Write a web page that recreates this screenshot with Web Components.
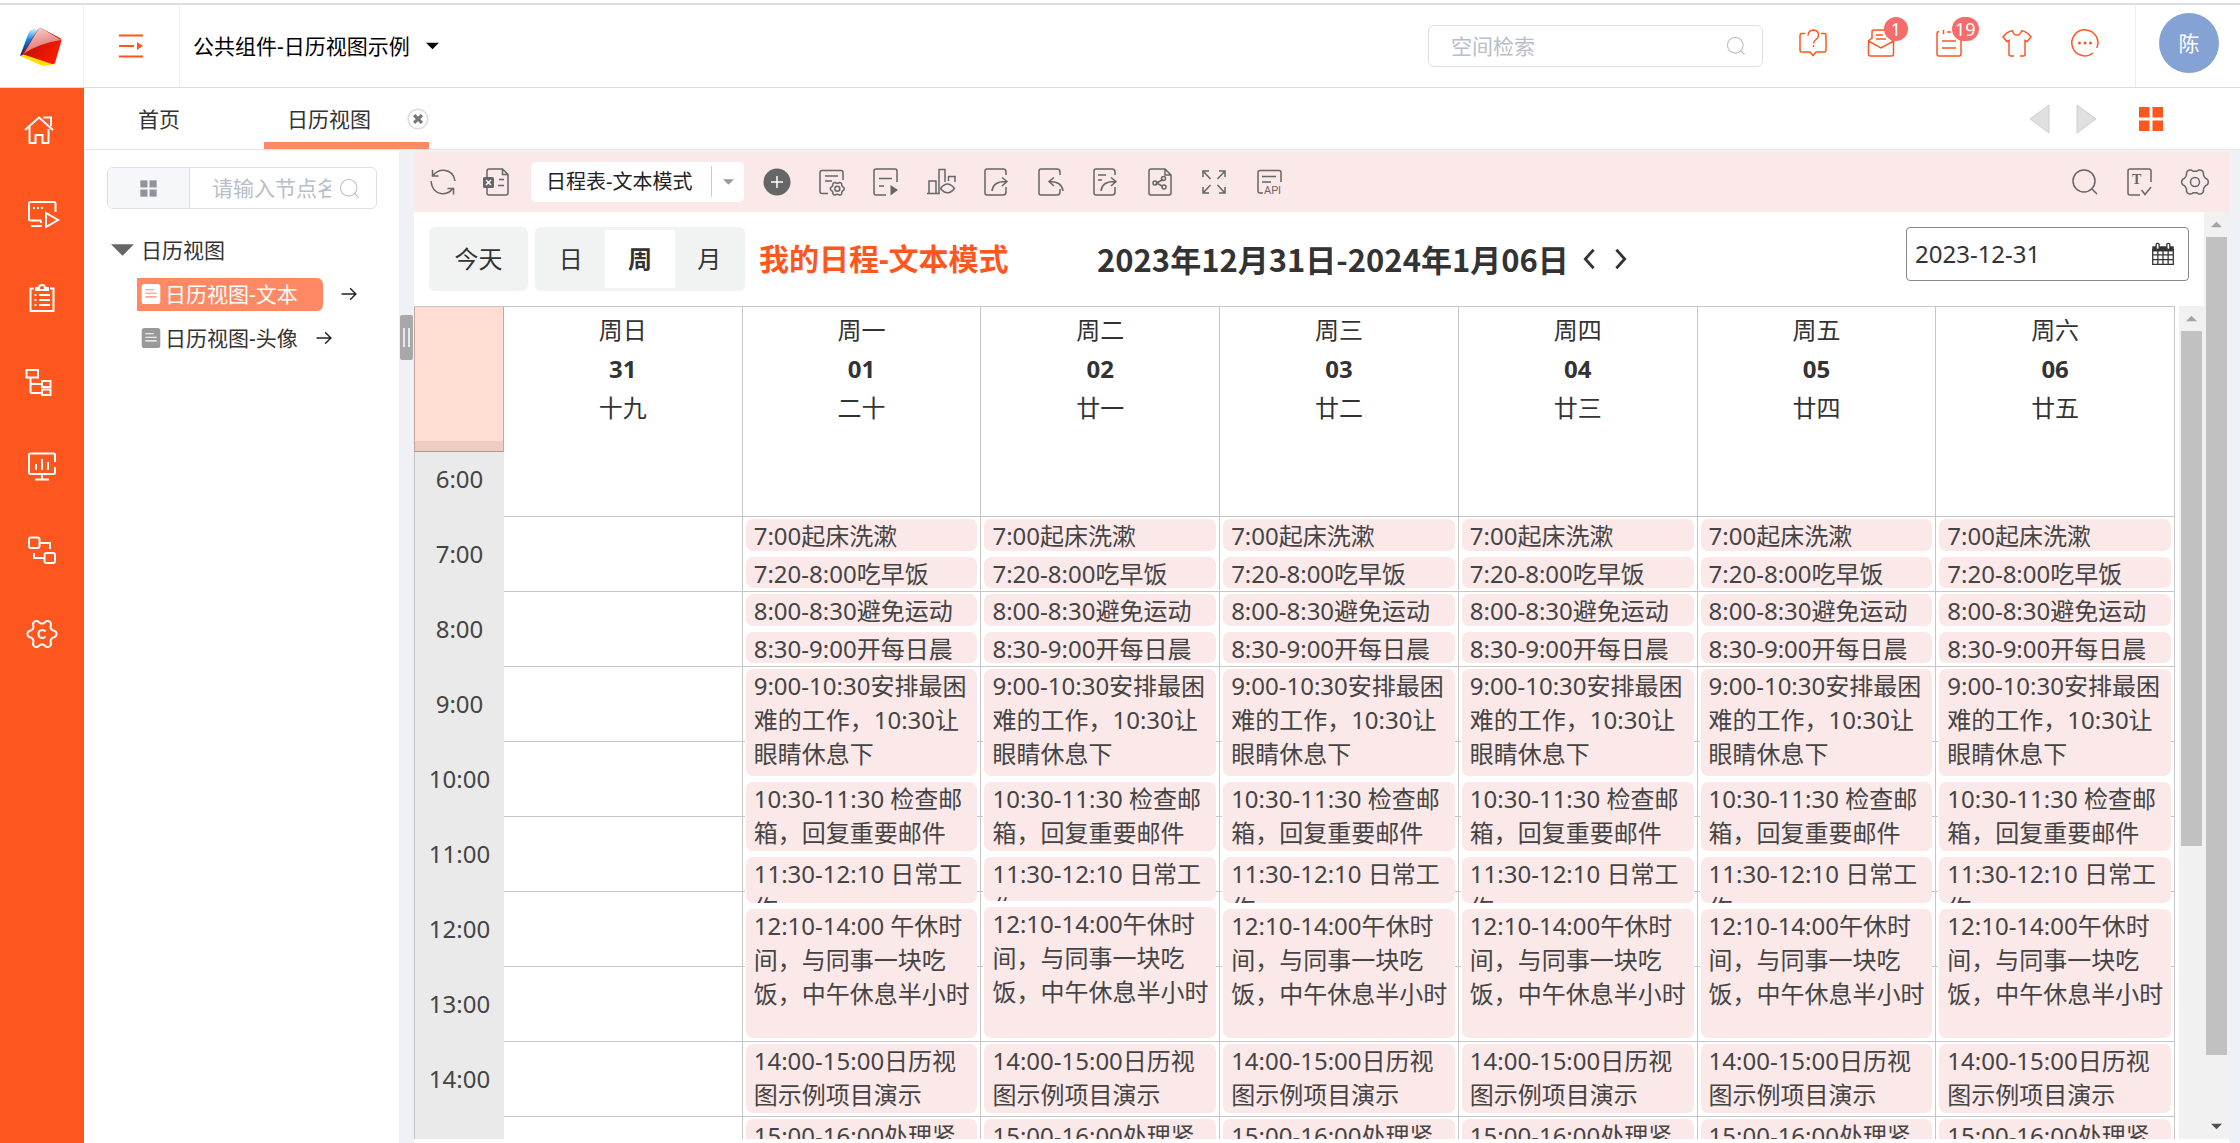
<!DOCTYPE html>
<html lang="zh-CN">
<head>
<meta charset="utf-8">
<title>日历视图</title>
<style>
  html, body { margin: 0; height: 100%; }
  body {
    font-family: "Noto Sans", "Noto Sans CJK SC", sans-serif;
    font-size: 21px; line-height: 30px; color: #333; background: #fff; overflow: hidden;
    --brand: #fd571f; --brand-soft: #ff8965; --tint: #fbe8e8; --strip: #eff1f6; --line: #c6c6c6; --edge: #dcdfe6; --muted: #b9bec8;
  }
</style>
</head>
<body>
<app-shell>
  <top-bar slot="top"></top-bar>
  <side-nav slot="nav"></side-nav>
  <tab-bar slot="tabs"></tab-bar>
  <tree-panel slot="tree"></tree-panel>
  <split-bar slot="split"></split-bar>
  <tool-bar slot="tools"></tool-bar>
  <calendar-view slot="main"></calendar-view>
</app-shell>
<script>
const RESET = `:host,*{box-sizing:border-box} button,input,select{font:inherit;color:inherit;margin:0;padding:0;border:0;background:none;outline:0} button{display:inline-flex;align-items:center;justify-content:center;cursor:pointer} a{color:inherit;text-decoration:none} input::placeholder{color:var(--muted);opacity:1}`;

function define(name, css, html) {
  customElements.define(name, class extends HTMLElement {
    connectedCallback() {
      if (this.shadowRoot) return;
      this.attachShadow({ mode: 'open' });
      this.shadowRoot.innerHTML = `<style>${RESET}${css}</style>${typeof html === 'function' ? html(this) : html}`;
    }
  });
}

// Outline of a six-lobed cog centred on 14,14.
const cog = (radius, depth) => 'M' + Array.from({ length: 96 }, (_, i) => {
  const a = i / 96 * 2 * Math.PI, c = Math.cos(6 * a);
  const r = radius + depth * Math.sign(c) * Math.pow(Math.abs(c), .6);
  return (14 + r * Math.cos(a)).toFixed(2) + ' ' + (14 + r * Math.sin(a)).toFixed(2);
}).join('L') + 'Z';

const ICONS = {
  fold: '<path d="M1 3.500H25M1 14H16M1 24.500H25"/><path d="M19 10l6 4-6 4z" fill="currentColor" stroke="none"/>',
  help: '<path d="M6 4.500H3Q1 4.500 1 6.500V21Q1 23 3 23H11L14 26.500L17 23H25Q27 23 27 21V6.500Q27 4.500 25 4.500H22"/><path d="M9 6.500Q9.500 1 14.500 1Q19.500 1.200 19.500 6.200Q19.500 8.500 17 10.500Q14.500 12.500 14.500 14.500"/><circle cx="14.500" cy="17" r="1" fill="currentColor" stroke="none"/>',
  mail: '<path d="M5 10V3Q5 1 7 1H20M1.500 12V25Q1.500 27 3.500 27H24.500Q26.500 27 26.500 25V12L14 19Z M1.500 12L5 9M26.500 12L23 9M9 6H16M9 10H19"/>',
  plan: '<path d="M4 2.500Q2 2.500 2 5V25Q2 27 4 27H24Q26 27 26 25V9M2 8V5M8.500 1V5M7 12H21M7 19H21M12 3H16"/>',
  shirt: '<path d="M11 27H8Q6 27 6 25.500V11.500L4 12.500L0 8Q4 2.500 9.500 1.800Q10.500 6 14 6Q17.500 6 18.500 1.800Q24 2.500 28 8L24 12.500L22 11.500V25.500Q22 27 20 27H17"/>',
  more: '<path d="M22 24A13 13 0 1 1 25.800 19"/><g fill="currentColor" stroke="none"><circle cx="8.500" cy="14" r="1.500"/><circle cx="14" cy="14" r="1.500"/><circle cx="19.500" cy="14" r="1.500"/></g>',
  search: '<circle cx="13" cy="13" r="11"/><path d="M20.500 20.500L26 26"/>',
  home: '<g transform="translate(-3 0)"><path d="M0 14L14 1.500L28 14M4.500 11V26.500Q4.500 27 5 27H10.500V19H17.500V27H23Q23.500 27 23.500 26.500V13M18 1.500H26V10"/></g>',
  device: '<path d="M13 20.500H2.500Q1 20.500 1 19V3.500Q1 2 2.500 2H26Q27.500 2 27.500 3.500V12M3 26H14M13 20.500V23M18 13V27L30 20Z"/><path d="M5 8H15" stroke-dasharray="2 2"/>',
  clip: '<path d="M6 4.500H2.500V27H25.500V4.500H22M8 6V4H11Q11 1 14 1Q17 1 17 4H20V6Z M11 11H22M11 16H22M11 21H22"/><path d="M6.500 11H8.500M6.500 16H8.500M6.500 21H8.500"/>',
  tree: '<g transform="translate(-3 0)"><path d="M1.500 2H13V9.500H1.500ZM5.500 9.500V24Q5.500 25 6.500 25H16M5.500 16H16M17 13H25.500V19H17ZM17 21.500H25.500V27H17Z"/></g>',
  board: '<path d="M27 10V3Q27 1.500 25.500 1.500H2.500Q1 1.500 1 3V20.500Q1 22 2.500 22H25.500Q27 22 27 20.500V15M14 22V27M7 27.500H21M8 12V18M14 7V18M20 10V18"/>',
  flow: '<rect x="1" y="1.500" width="10.500" height="10.500" rx="2"/><rect x="16.500" y="17" width="10.500" height="10" rx="2"/><path d="M12 7H22V13M6 17V22H16"/>',
  gearc: '<path d="' + cog(12.5, 2) + '"/><path d="M17.500 11.500Q16.500 10 14 10Q10.500 10.200 10.500 14Q10.500 17.800 14 18Q16.500 18 17.500 16.500"/>',
  gear: '<path d="' + cog(12, 1.3) + '"/><circle cx="14" cy="14" r="4.500"/>',
  refresh: '<path d="M3.500 2L3.500 8H9.500M4 7.500Q8 2 15 2.200Q24.500 3 26 13M2 13Q3 24 12 25.500Q20 26.500 24 20M18.500 20.500H24.500V26.500"/>',
  excel: '<path d="M5 9V3Q5 1 7 1H20.500L26 6.500V25Q26 27 24 27H7Q5 27 5 25V20M20.500 1V6.500H26M17 11.500H22M16 17.500H22"/><rect x="1" y="9" width="11" height="11" rx="1.500" fill="currentColor" stroke="none"/><path d="M4 12L9 17M9 12L4 17" stroke="#fff"/>',
  plus: '<circle cx="14" cy="14" r="13.500" fill="currentColor" stroke="none"/><path d="M14 8V20M8 14H20" stroke="#fff"/>',
  docgear: '<path d="M10 25.500H4Q2 25.500 2 23.500V4.500Q2 2.500 4 2.500H23Q25 2.500 25 4.500V12M7 8H20M7 13H14"/><path d="' + cog(12, 1.3) + '" transform="translate(12 13.500) scale(.52)" stroke-width="2.900"/><circle cx="19.300" cy="20.800" r="2.500"/>',
  docplay: '<path d="M14 27H4Q2 27 2 25V3Q2 1 4 1H23Q25 1 25 3V14M7 10.500H20M7 18H12"/><path d="M18.500 17L26 22L18.500 27.500Z" fill="currentColor" stroke="none"/>',
  charteye: '<path d="M0 25.500H13M2 25V13H9V25M12 25V1.500H18V14M21.500 13V8.500H28V14"/><path d="M13.500 20.500Q20.500 11.500 27.500 20.500Q20.500 29 13.500 20.500Z"/>',
  docout: '<path d="M24 7V4Q24 1 21 1H5Q3 1 3 3V25Q3 27 5 27H21Q24 27 24 24V19M10 23Q11 13 24.500 13.500M20 9.500L25 13.500L20 18"/>',
  docin: '<path d="M24 7V4Q24 1 21 1H5Q3 1 3 3V25Q3 27 5 27H21Q24 27 24 24V21M27 23Q26 13.500 13.500 13.500M18 9.500L13 13.500L18 18"/>',
  doclist: '<path d="M24 7V4Q24 1 21 1H5Q3 1 3 3V25Q3 27 5 27H21Q24 27 24 24V19M10 23Q11 13 24.500 13.500M20 9.500L25 13.500L20 18M7 7H15M7 12H11"/>',
  docshare: '<path d="M19 1H5Q3 1 3 3V25Q3 27 5 27H23Q25 27 25 25V7ZM19 1V7H25M17 11.500L10.500 15L17 18.500"/><circle cx="9" cy="15" r="2"/><circle cx="17.500" cy="10.500" r="2"/><circle cx="18" cy="19" r="2"/>',
  expand: '<path d="M3 9V3H9M19 3H25V9M25 19V25H19M9 25H3V19M3 3L10.500 11M25 3L17.500 11M25 25L17.500 17M3 25L10.500 17"/>',
  api: '<path d="M8 25H5Q3 25 3 23V4.500Q3 2.500 5 2.500H24Q26 2.500 26 4.500V14M7 8.500H21M7 14H16"/><text x="9" y="26" font-size="11" font-family="Roboto" fill="currentColor" stroke="none">API</text>',
  textcheck: '<path d="M14 27H4Q2 27 2 25V3Q2 1 4 1H23Q25 1 25 3V14M15.500 22L19 26.500L25 19"/><text x="6" y="15.500" font-size="14" font-weight="bold" font-family="Liberation Serif" fill="currentColor" stroke="none">T</text>',
  grid: '<g fill="currentColor" stroke="none"><rect x="2" y="2" width="10.500" height="10.500"/><rect x="15.500" y="2" width="10.500" height="10.500"/><rect x="2" y="15.500" width="10.500" height="10.500"/><rect x="15.500" y="15.500" width="10.500" height="10.500"/></g>',
  down: '<path d="M0 7H28L14 21Z" fill="currentColor" stroke="none"/>',
  up: '<path d="M0 21H28L14 7Z" fill="currentColor" stroke="none"/>',
  left: '<path d="M23 0V28L4 14Z" fill="#e0e0e0" stroke="#cfcfcf" stroke-width="1"/>',
  right: '<path d="M5 0V28L24 14Z" fill="#e0e0e0" stroke="#cfcfcf" stroke-width="1"/>',
  close: '<circle cx="14" cy="14" r="12.500" fill="#fff" stroke="#ddd" stroke-width="2"/><path d="M9 9L19 19M19 9L9 19" stroke="#777" stroke-width="4"/>',
  arrow: '<path d="M1 14H26M16 4L26 14L16 24" stroke-width="2.500"/>',
  prev: '<path d="M19 4L10 14L19 24" stroke-width="3"/>',
  next: '<path d="M9 4L18 14L9 24" stroke-width="3"/>',
  page: '<rect x="1" y="0" width="26" height="28" rx="4" fill="currentColor" stroke="none"/><path d="M6 8H18M6 13H22M6 18H22" stroke="var(--ink,#fff)"/>',
  calendar: '<path d="M2 9H26V26H2ZM8 9V26M14 9V26M20 9V26M2 15H26M2 20.500H26" stroke-width="1.500"/><path d="M1.500 5H26.500V11H1.500Z" fill="currentColor" stroke="none"/><rect x="6" y="1.500" width="3.500" height="7" rx="1.500" fill="#fff"/><rect x="18.500" y="1.500" width="3.500" height="7" rx="1.500" fill="#fff"/>'
};

define('ui-icon',
  `:host{display:inline-block;flex:none;width:28px;height:28px} svg{display:block;width:100%;height:100%;overflow:visible}`,
  el => `<svg viewBox="0 0 28 28" fill="none" stroke="currentColor" stroke-width="${el.getAttribute('weight') || 1.5}" aria-hidden="true">${ICONS[el.getAttribute('name')]}</svg>`);

define('app-shell',
  `:host{display:grid;height:100vh;grid-template-columns:84px minmax(0,1fr);grid-template-rows:auto minmax(0,1fr)}
   .top{grid-column:1/-1}
   .page{display:flex;flex-direction:column;min-width:0;min-height:0;background:var(--strip)}
   .work{flex:1;display:flex;min-height:0}
   .main{flex:1;display:flex;flex-direction:column;min-width:0;min-height:0;padding:2px 11px 0 0}`,
  `<div class="top"><slot name="top"></slot></div><slot name="nav"></slot>
   <div class="page"><slot name="tabs"></slot><div class="work"><slot name="tree"></slot><slot name="split"></slot><div class="main"><slot name="tools"></slot><slot name="main"></slot></div></div></div>`);

define('app-logo', `:host{display:block;width:46px;height:42px} svg{display:block}`,
  `<svg width="46" height="42" viewBox="18 25 46 42" aria-hidden="true">
    <defs>
      <linearGradient id="b" x1="0" y1="0" x2="0" y2="1"><stop offset="0" stop-color="#d8f1ff"/><stop offset=".4" stop-color="#0a86e8"/><stop offset="1" stop-color="#04145e"/></linearGradient>
      <linearGradient id="p" x1="0" y1="0" x2=".4" y2="1"><stop offset="0" stop-color="#fbdcd8"/><stop offset="1" stop-color="#dc6a66"/></linearGradient>
      <linearGradient id="r" x1="0" y1="0" x2="1" y2=".6"><stop offset="0" stop-color="#a40d0d"/><stop offset="1" stop-color="#ff1a00"/></linearGradient>
    </defs>
    <path d="M20 55L22 52L55 63L43 65Z" fill="#ffe000"/>
    <path d="M29 31Q31 27 39 28L30 50L20 55Z" fill="url(#b)"/>
    <path d="M39 27Q41 27 43 28L60 37Q62 38 61 41L55 62Q54 63.500 52 63L22 53Z" fill="url(#r)"/>
    <path d="M39 27Q41 27 43 28L61 39Q40 42 24 52.500Z" fill="url(#p)"/>
  </svg>`);

define('count-badge',
  `:host{position:absolute;left:17px;top:-12px;min-width:24px;height:24px;padding:0 3px;border-radius:12px;background:#f56c6c;color:#fff;font-size:18px;line-height:24px;text-align:center}`,
  `<slot></slot>`);

define('top-bar',
  `:host{display:block;padding-top:3px;background:#fff;border-bottom:1px solid #dcdcdc}
   header{display:flex;align-items:stretch;height:84px;border-top:2px solid #dedede}
   .logo{width:84px;padding:21px 18px 0;border-right:1px solid #eee}
   .fold{width:96px;color:var(--brand);border-right:1px solid #eee}
   .space{gap:16px;padding-left:13px;color:#000}
   .space ui-icon{width:13px;height:14px}
   .search{display:flex;align-items:center;width:335px;height:42px;margin:20px 24px 0 auto;padding:0 16px 0 22px;border:1px solid var(--edge);border-radius:6px;color:var(--muted)}
   .search input{flex:1;min-width:0} .search ui-icon{width:20px;height:20px}
   nav{display:flex;justify-content:space-between;width:324px;margin-right:24px;padding:24px 12px 0;color:var(--brand)}
   nav button{position:relative;width:28px;height:28px}
   .me{width:105px;padding:0 0 6px 2px;border-left:1px solid #eee}
   .me span{width:60px;height:60px;border-radius:50%;background:#84a3d4;color:#fff;text-align:center;line-height:60px}`,
  `<header><a class="logo" href="#" aria-label="主页"><app-logo></app-logo></a>
    <button class="fold" aria-label="折叠菜单"><ui-icon name="fold" weight="1.800"></ui-icon></button>
    <button class="space">公共组件-日历视图示例<ui-icon name="down"></ui-icon></button>
    <label class="search"><input placeholder="空间检索" aria-label="空间检索"><ui-icon name="search"></ui-icon></label>
    <nav><button aria-label="帮助"><ui-icon name="help"></ui-icon></button>
      <button aria-label="消息"><ui-icon name="mail"></ui-icon><count-badge>1</count-badge></button>
      <button aria-label="待办"><ui-icon name="plan"></ui-icon><count-badge>19</count-badge></button>
      <button aria-label="主题"><ui-icon name="shirt"></ui-icon></button>
      <button aria-label="更多"><ui-icon name="more"></ui-icon></button></nav>
    <button class="me" aria-label="用户"><span>陈</span></button></header>`);

define('side-nav',
  `:host{display:block;background:var(--brand);color:#fff} nav{display:flex;flex-direction:column} a{display:flex;align-items:center;justify-content:center;height:84px}`,
  `<nav>${['home', 'device', 'clip', 'tree', 'board', 'flow', 'gearc'].map(n => `<a href="#" aria-label="${n}"><ui-icon name="${n}" weight="2"></ui-icon></a>`).join('')}</nav>`);

define('tab-bar',
  `:host{display:flex;align-items:center;height:62px;padding-left:54px;background:#fff;border-bottom:1px solid #e4e6ea}
   a{display:flex;align-items:center;height:61px} .cur{justify-content:space-between;width:165px;margin-left:84px;padding:7px 0 0 23px;border-bottom:7px solid var(--brand-soft)}
   .cur ui-icon{width:22px;height:22px}
   .pager{display:flex;gap:18px;margin-left:auto;padding-right:37px} .all{color:var(--brand);padding-right:75px}`,
  `<a href="#">首页</a><a class="cur" href="#"><span>日历视图</span><ui-icon name="close"></ui-icon></a>
   <div class="pager"><button aria-label="上一页签"><ui-icon name="left"></ui-icon></button><button aria-label="下一页签"><ui-icon name="right"></ui-icon></button></div>
   <button class="all" aria-label="全部页签"><ui-icon name="grid"></ui-icon></button>`);

define('tree-node',
  `:host{display:flex;align-items:center;height:44px;gap:18px}
   a{display:flex;align-items:center;gap:4px;height:33px;padding:0 0 0 4px;color:#333} ui-icon{color:#999;width:20px;height:22px}
   button ui-icon{width:16px;height:16px;color:#222}
   :host([current]) a{width:186px;background:var(--brand-soft);color:#fff;border-radius:0 6px 6px 0} :host([current]) a ui-icon{color:#fff;--ink:#ff8965}`,
  `<a href="#"><ui-icon name="page"></ui-icon><slot></slot></a><button aria-label="打开"><ui-icon name="arrow"></ui-icon></button>`);

define('tree-panel',
  `:host{display:block;flex:none;width:315px;padding:17px 22px 0 23px;background:#fff}
   .find{display:flex;height:42px;border:1px solid var(--edge);border-radius:6px;overflow:hidden}
   .find>button{width:82px;background:#f5f7fa;border-right:1px solid var(--edge);color:#909399} .find>button ui-icon{width:19px;height:19px}
   label{flex:1;display:flex;align-items:center;gap:8px;min-width:0;padding:0 16px 0 22px;color:var(--muted)} input{flex:1;min-width:0} label ui-icon{width:21px;height:21px}
   .root{display:flex;align-items:center;gap:7px;height:44px;margin-top:19px;padding-left:4px;color:#333} .root ui-icon{width:23px;height:24px;color:#666}
   .kids{padding-left:30px}`,
  `<div class="find"><button aria-label="视图"><ui-icon name="grid"></ui-icon></button><label><input placeholder="请输入节点名称" aria-label="请输入节点名称"><ui-icon name="search"></ui-icon></label></div>
   <div class="root"><ui-icon name="down"></ui-icon>日历视图</div>
   <div class="kids"><tree-node current>日历视图-文本</tree-node><tree-node>日历视图-头像</tree-node></div>`);

define('split-bar',
  `:host{display:block;flex:none;width:15px;padding:165px 1px 0;background:var(--strip)}
   div{display:flex;justify-content:center;align-items:center;gap:3px;height:45px;background:#a8a8a8;border-radius:2px} i{width:2px;height:19px;background:#e8e8ee}`,
  `<div><i></i><i></i></div>`);

define('tool-bar',
  `:host{display:flex;flex:none;align-items:center;height:60px;padding:0 20px 0 15px;background:var(--tint);color:#666}
   .pick{position:relative;display:flex;align-items:center;width:213px;height:40px;margin:0 19px 0 21px;background:#fff;border-radius:5px}
   select{appearance:none;width:100%;height:40px;padding:0 40px 0 15px;color:#222;font-size:20px}
   .pick::after{content:"";position:absolute;right:32px;top:4px;height:31px;border-left:1px solid #ccc} .pick ui-icon{position:absolute;right:10px;width:11px;height:14px;color:#999;pointer-events:none}
   .first{display:flex;gap:25px} .set{display:flex;justify-content:space-between;width:520px} .last{display:flex;gap:27px;margin-left:auto}`,
  (() => { const b = n => `<button aria-label="${n}"><ui-icon name="${n}"></ui-icon></button>`;
    return `<div class="first">${['refresh', 'excel'].map(b).join('')}</div>
    <label class="pick"><select aria-label="视图"><option>日程表-文本模式</option></select><ui-icon name="down"></ui-icon></label>
    <div class="set">${['plus', 'docgear', 'docplay', 'charteye', 'docout', 'docin', 'doclist', 'docshare', 'expand', 'api'].map(b).join('')}</div>
    <div class="last">${['search', 'textcheck', 'gear'].map(b).join('')}</div>`; })());

define('scroll-track',
  `:host{display:flex;flex-direction:column;flex:none;width:25px;padding:0 2px;background:#f1f1f1}
   span{display:flex;flex:none;height:25px;align-items:center;justify-content:center;color:#a3a3a3} .end{color:#505050;margin-top:auto} ui-icon{width:11px;height:11px}
   i{display:block;height:var(--thumb);background:#c1c1c1}`,
  el => `<span><ui-icon name="up"></ui-icon></span><i></i>${el.hasAttribute('end') ? '<span class="end"><ui-icon name="down"></ui-icon></span>' : ''}`);

define('day-event',
  `:host{display:block;flex:none;height:var(--h);padding:0 6px 0 8px;border-radius:7px;background:var(--tint);box-shadow:-1px 0 0 #fff;overflow:hidden;color:#444;line-height:34px;word-break:break-all}`,
  `<slot></slot>`);

define('day-column',
  `:host{display:block;min-width:0;border-right:1px solid var(--line)}
   header{height:135px;padding-top:3px;text-align:center;line-height:39px} b{display:block}
   .hours{height:750px;padding:77px 3px 0;display:flex;flex-direction:column;gap:6px;background:repeating-linear-gradient(transparent 0 74px,var(--line) 74px 75px)}`,
  el => `<header>${el.getAttribute('week')}<b>${el.getAttribute('date')}</b>${el.getAttribute('lunar')}</header><div class="hours"><slot></slot></div>`);

const DAYS = [['周日', '31', '十九'], ['周一', '01', '二十'], ['周二', '02', '廿一'], ['周三', '03', '廿二'], ['周四', '04', '廿三'], ['周五', '05', '廿四'], ['周六', '06', '廿五']];
const eventsOf = d => d === 0 ? [] : [
  [32, '7:00起床洗漱'], [31, '7:20-8:00吃早饭'], [32, '8:00-8:30避免运动'], [31, '8:30-9:00开每日晨会'],
  [107, '9:00-10:30安排最困难的工作，10:30让眼睛休息下'], [69, '10:30-11:30 检查邮箱，回复重要邮件'],
  [d === 2 ? 44 : 46, '11:30-12:10 日常工作'], [d === 2 ? 131 : 129, `12:10-14:00${d === 1 ? ' ' : ''}午休时间，与同事一块吃饭，中午休息半小时`],
  [69, '14:00-15:00日历视图示例项目演示'], [69, '15:00-16:00处理紧急工作']];

define('calendar-view',
  `:host{display:flex;flex:1;min-height:0;background:#fff;padding-bottom:4px;font-size:24px}
   .body{flex:1;display:flex;flex-direction:column;min-width:0}
   .bar{display:flex;flex:none;align-items:center;height:94px;padding:0 15px 0 15px}
   .today{width:99px;height:64px;background:#f1f3f3;border-radius:6px}
   .modes{display:flex;width:210px;height:64px;margin:0 14px 0 7px;padding:3px 1px;background:#f1f3f3;border-radius:6px} .modes button{flex:1} .modes .on{background:#fff;font-weight:bold}
   h1{margin:0;font-size:30px;line-height:40px;color:var(--brand);width:338px;flex:none} h2{margin:0 7px 0 0;font:bold 31px/40px "Noto Sans CJK SC",sans-serif}
   .step{display:flex;gap:6px} .step ui-icon{width:26px;height:26px}
   .date{display:flex;align-items:center;align-self:flex-start;width:283px;height:54px;margin:15px 0 0 auto;padding:0 13px 0 8px;border:1px solid #888;border-radius:4px} .date input{flex:1;min-width:0} .date ui-icon{width:24px;height:26px}
   .view{flex:1;display:flex;min-height:0}
   .grid{flex:1;min-width:0;display:grid;grid-template-columns:90px repeat(7,minmax(0,1fr));margin-right:4px;overflow:hidden;border-top:1px solid var(--line)}
   .times{margin-top:-1px;background:#eaeaea;border-left:1px solid var(--line);text-align:center;color:#444;line-height:75px}
   .corner{height:146px;margin:0 0 -11px -1px;background:#ffddd3;border:1px solid #c0a8a2;border-bottom-color:#b09891;box-shadow:inset 0 -10px #edccc2}
   .view scroll-track{--thumb:515px} .outer{--thumb:818px}`,
  `<div class="body"><div class="bar"><button class="today">今天</button><div class="modes"><button>日</button><button class="on">周</button><button>月</button></div>
     <h1>我的日程-文本模式</h1><h2>2023年12月31日-2024年1月06日</h2>
     <div class="step"><button aria-label="上一周"><ui-icon name="prev"></ui-icon></button><button aria-label="下一周"><ui-icon name="next"></ui-icon></button></div>
     <label class="date"><input value="2023-12-31" aria-label="日期"><ui-icon name="calendar"></ui-icon></label></div>
   <div class="view"><div class="grid"><div class="times"><div class="corner"></div>${[6, 7, 8, 9, 10, 11, 12, 13, 14].map(h => `<div>${h}:00</div>`).join('')}</div>
     ${DAYS.map(([w, n, l], d) => `<day-column week="${w}" date="${n}" lunar="${l}">${eventsOf(d).map(([h, t]) => `<day-event style="--h:${h}px">${t}</day-event>`).join('')}</day-column>`).join('')}
   </div><scroll-track></scroll-track></div></div><scroll-track class="outer" end></scroll-track>`);
</script>
</body>
</html>
